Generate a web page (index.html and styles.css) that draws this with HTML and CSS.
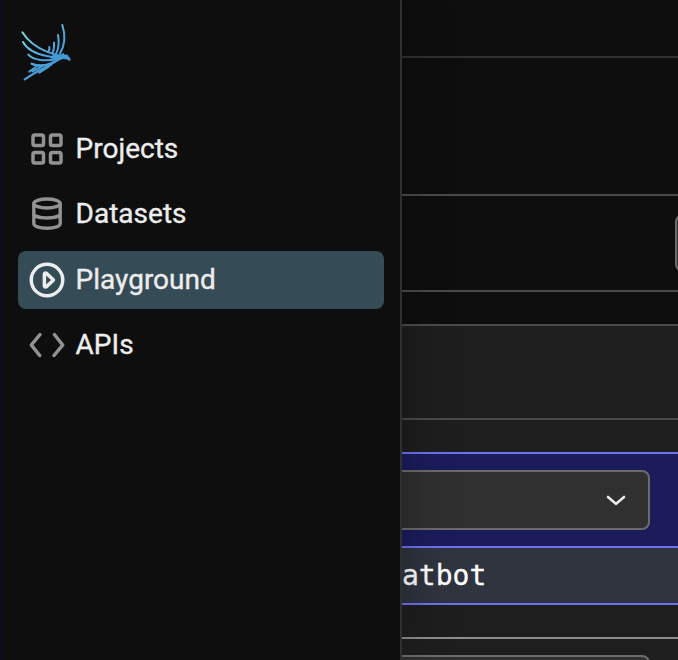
FILE: index.html
```html
<!DOCTYPE html>
<html lang="en">
<head>
<meta charset="utf-8">
<title>Playground</title>
<link rel="stylesheet" href="styles.css">
</head>
<body>
<div class="app">
  <nav class="sidebar">
    <svg class="logo" viewBox="0 0 192 204" aria-hidden="true">
      <defs>
        <linearGradient id="wing" gradientUnits="userSpaceOnUse" x1="24" y1="40" x2="100" y2="120">
          <stop offset="0" stop-color="#86dccb"/>
          <stop offset=".3" stop-color="#6cc4e4"/>
          <stop offset="1" stop-color="#4a9fd8"/>
        </linearGradient>
      </defs>
      <g fill="none" stroke="url(#wing)" stroke-width="6" stroke-linecap="round">
        <path d="M25 43C42 70 66 88 98 101C114 107 125 110 138 114"/>
        <path d="M27 72C40 96 68 108 98 114C112 117 122 118 134 119"/>
        <path d="M43 110C58 127 94 131 132 122"/>
        <path d="M53 137C78 146 108 141 134 123"/>
        <path d="M145 21C155 52 153 82 137 108"/>
        <path d="M132 51C136 72 134 92 126 108"/>
        <path d="M120 74C122 88 120 96 115 106"/>
        <path d="M106 87C107 93 106 97 103 101"/>
        <path d="M110 141C84 151 64 163 32 184"/>
        <path d="M53 137C66 148 88 143 112 140"/>
        <path d="M66 147L46 161"/>
        <path d="M84 145L56 160"/>
        <path d="M104 146L76 164"/>
      </g>
      <path class="logo-body" d="M112 106C124 109 132 112 140 110C146 104 150 105 153 111C159 108 163 111 165 117C170 120 171 125 168 130C162 124 156 124 148 123C139 124 130 132 114 140L100 143L121 127L104 124L119 119Z"/>
    </svg>
    <ul class="nav">
      <li class="item">
        <svg class="icon" viewBox="0 0 24 24"><path d="M9 3H5a2 2 0 0 0-2 2v4a2 2 0 0 0 2 2h4a2 2 0 0 0 2-2V5a2 2 0 0 0-2-2zM5 9V5h4v4zM19 3h-4a2 2 0 0 0-2 2v4a2 2 0 0 0 2 2h4a2 2 0 0 0 2-2V5a2 2 0 0 0-2-2zm-4 6V5h4v4zM9 13H5a2 2 0 0 0-2 2v4a2 2 0 0 0 2 2h4a2 2 0 0 0 2-2v-4a2 2 0 0 0-2-2zm-4 6v-4h4v4zM19 13h-4a2 2 0 0 0-2 2v4a2 2 0 0 0 2 2h4a2 2 0 0 0 2-2v-4a2 2 0 0 0-2-2zm-4 6v-4h4v4z"/></svg>
        <span>Projects</span>
      </li>
      <li class="item">
        <svg class="icon line" viewBox="0 0 42 42"><ellipse cx="21" cy="10.500" rx="13.200" ry="4.500"/><path d="M7.800 10.500V30.500C7.800 33.200 13 35.300 21 35.300S34.200 33.200 34.200 30.500V10.500M7.800 20.500C7.800 23.100 13 25 21 25S34.200 23.100 34.200 20.500"/></svg>
        <span>Datasets</span>
      </li>
      <li class="item active">
        <svg class="icon" viewBox="0 0 24 24"><path d="M12 2a10 10 0 1 0 10 10A10 10 0 0 0 12 2zm0 18a8 8 0 1 1 8-8 8 8 0 0 1-8 8z"/><path d="M12.340 7.450a1.700 1.700 0 0 0-1.850-.300 1.600 1.600 0 0 0-1 1.480v6.740a1.600 1.600 0 0 0 1 1.480 1.680 1.680 0 0 0 .690.150 1.740 1.740 0 0 0 1.160-.450L16 13.180a1.600 1.600 0 0 0 0-2.360zm-.840 7.150V9.400l2.810 2.600z"/></svg>
        <span>Playground</span>
      </li>
      <li class="item">
        <svg class="icon" viewBox="0 0 24 24"><path d="M8.640 5.230a1 1 0 0 0-1.410.130l-5 6a1 1 0 0 0 0 1.270l4.830 6a1 1 0 0 0 .780.370 1 1 0 0 0 .780-1.630L4.290 12l4.480-5.360a1 1 0 0 0-.130-1.410zM21.780 11.370l-4.780-6a1 1 0 0 0-1.410-.150 1 1 0 0 0-.150 1.410L19.710 12l-4.480 5.370a1 1 0 0 0 .130 1.400A1 1 0 0 0 16 19a1 1 0 0 0 .770-.360l5-6a1 1 0 0 0 .010-1.270z"/></svg>
        <span>APIs</span>
      </li>
    </ul>
  </nav>
  <main class="main">
    <div class="topbar"></div>
    <div class="heading"></div>
    <div class="toolbar"><div class="button"></div></div>
    <div class="spacer"></div>
    <div class="panel-head"></div>
    <div class="panel">
      <div class="message">
        <div class="message-head">
          <div class="select">
            <svg class="chevron" viewBox="0 0 20 12"><path d="M2 3L10 9.900L18 3"/></svg>
          </div>
        </div>
        <div class="editor">atbot</div>
      </div>
      <div class="message next">
        <div class="select"></div>
      </div>
    </div>
  </main>
</div>
</body>
</html>
```

FILE: styles.css
```css
* {
  box-sizing: border-box;
}

body {
  margin: 0;
  background: #0e0e0e;
  color: #ededed;
  font-family: Roboto, "Liberation Sans", sans-serif;
}

.app {
  display: grid;
  grid-template-columns: 402px 1fr;
  height: 660px;
  overflow: hidden;
}

.sidebar {
  position: relative;
  z-index: 1;
  padding: 18px 16px 0 16px;
  background: #0e0e0e;
  border-left: 2px solid #0c0a1c;
  border-right: 2px solid #303030;
  box-shadow: 0 0 50px rgba(0, 0, 0, 0.3);
}

.logo {
  display: block;
  width: 64px;
  height: 68px;
  margin-left: -4px;
}

.logo-body {
  fill: #4498d3;
}

.nav {
  display: flex;
  flex-direction: column;
  gap: 7px;
  margin: 34px 0 0;
  padding: 0;
  list-style: none;
}

.item {
  display: flex;
  align-items: center;
  gap: 8px;
  height: 58px;
  padding-left: 7.600px;
  border-radius: 8px;
  font-size: 28px;
  line-height: 40px;
  -webkit-text-stroke: 0.350px #ededed;
}

.item.active {
  margin-top: 1px;
  background: #354b55;
}

.icon {
  width: 42px;
  height: 42px;
  fill: #929292;
}

.icon.line {
  fill: none;
  stroke: #929292;
  stroke-width: 3.400;
}

.active .icon {
  fill: #ededed;
}

.main {
  display: flex;
  flex-direction: column;
  min-width: 0;
  overflow: hidden;
}

.main > div {
  flex-shrink: 0;
}

.topbar {
  height: 58px;
  border-bottom: 2px solid #303030;
}

.heading {
  height: 138px;
  border-bottom: 2px solid #4b4b4b;
}

.toolbar {
  height: 96px;
  padding: 18px 0 0 273px;
  border-bottom: 2px solid #4b4b4b;
}

.button {
  width: 120px;
  height: 58px;
  background: #303030;
  border: 2px solid #6b6b6b;
  border-radius: 8px;
}

.spacer {
  height: 34px;
  border-bottom: 2px solid #4b4b4b;
}

.panel-head {
  height: 94px;
  background: #1e1e1e;
  border-bottom: 2px solid #4b4b4b;
}

.panel {
  height: 240px;
  padding-top: 32px;
  background: #1e1e1e;
}

.message-head {
  height: 96px;
  padding-top: 16px;
  background: #1c1c5d;
  border: solid #6e72f2;
  border-width: 2px 0;
}

.select {
  display: flex;
  align-items: center;
  justify-content: flex-end;
  width: 248px;
  height: 60px;
  padding-right: 22px;
  background: #303030;
  border: 2px solid #6b6b6b;
  border-left: 0;
  border-radius: 0 8px 8px 0;
}

.chevron {
  width: 20px;
  height: 12px;
  fill: none;
  stroke: #ededed;
  stroke-width: 2.600;
  stroke-linecap: round;
}

.editor {
  height: 57px;
  background: #30343f;
  border-bottom: 2px solid #6e72f2;
  color: #fff;
  font: 28px/55px "DejaVu Sans Mono", monospace;
  -webkit-text-stroke: 0.300px #fff;
}

.next {
  margin-top: 32px;
  padding-top: 16px;
  border-top: 2px solid #8e8e8e;
}
```
